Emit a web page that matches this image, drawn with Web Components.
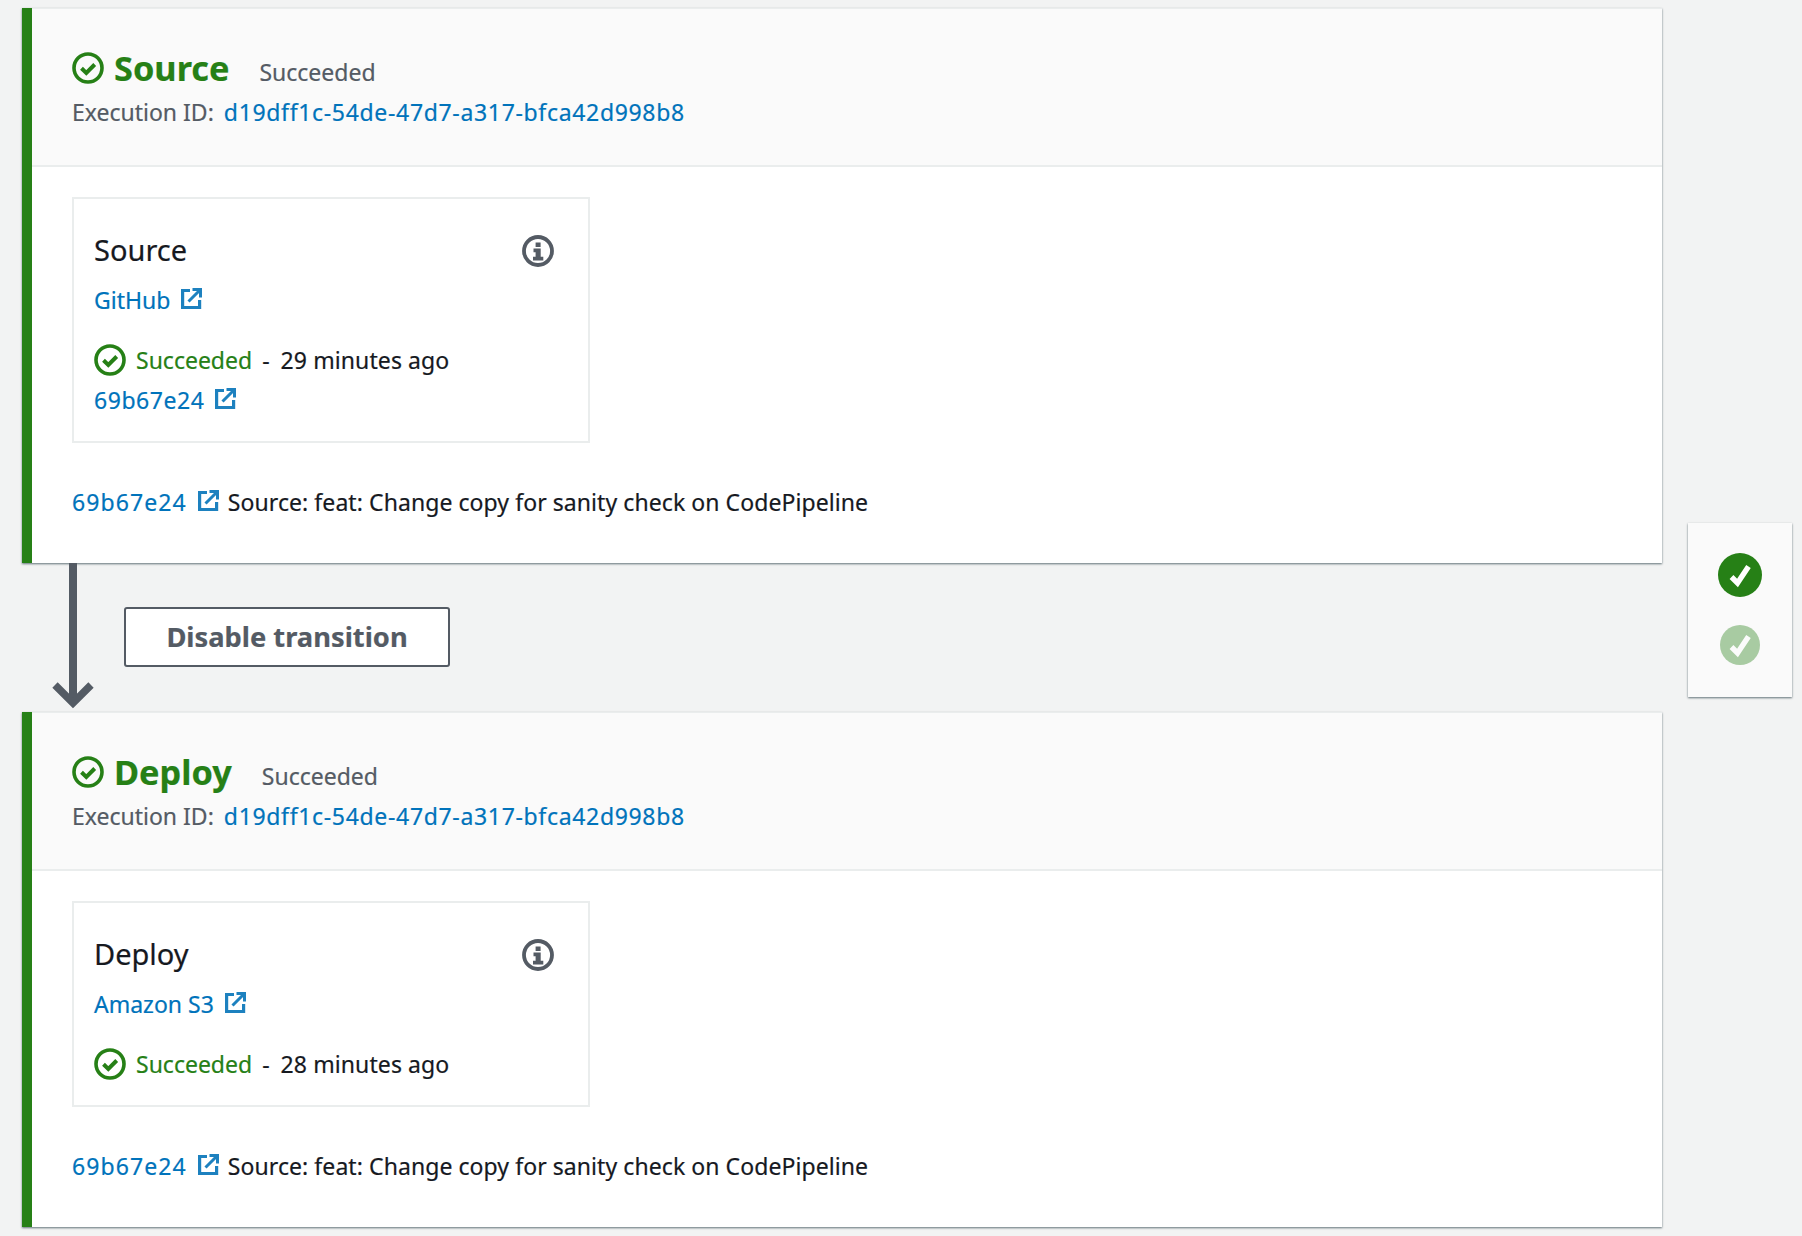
<!DOCTYPE html>
<html>
<head>
<meta charset="utf-8">
<title>Pipeline</title>
<style>
  html, body { margin: 0; padding: 0; background: #f2f3f3; }
  body { font-family: "Noto Sans", "Liberation Sans", sans-serif; color: #16191f; height: 1236px; overflow: hidden; -webkit-text-stroke: .2px; }
</style>
</head>
<body>
<pipeline-view>
  <pipeline-stage name="Source" exec="d19dff1c-54de-47d7-a317-bfca42d998b8">
    <action-card name="Source" provider="GitHub" ago="29 minutes ago" commit="69b67e24"></action-card>
    <commit-line slot="commit" sha="69b67e24" message="Source: feat: Change copy for sanity check on CodePipeline"></commit-line>
  </pipeline-stage>
  <stage-transition label="Disable transition"></stage-transition>
  <pipeline-stage name="Deploy" exec="d19dff1c-54de-47d7-a317-bfca42d998b8">
    <action-card name="Deploy" provider="Amazon S3" ago="28 minutes ago"></action-card>
    <commit-line slot="commit" sha="69b67e24" message="Source: feat: Change copy for sanity check on CodePipeline"></commit-line>
  </pipeline-stage>
  <stage-nav slot="nav"></stage-nav>
</pipeline-view>

<script>
const GREEN = '#268016';

const CHECK_CIRCLE = (size) => `
  <svg width="${size}" height="${size}" viewBox="0 0 32 32" fill="none" stroke="${GREEN}" aria-hidden="true">
    <circle cx="16" cy="16" r="14" stroke-width="3.6"/>
    <path d="M9.5 16.3l4.8 4.6 8.4-8.4" stroke-width="4"/>
  </svg>`;

class PipelineView extends HTMLElement {
  constructor() {
    super();
    this.attachShadow({ mode: 'open' });
    this.shadowRoot.innerHTML = `
      <style>
        :host { display: flex; align-items: flex-start; padding: 8px 0 0 22px; }
        .stages { width: 1640px; flex: none; }
        .side { margin: 515px 0 0 26px; }
      </style>
      <div class="stages"><slot></slot></div>
      <div class="side"><slot name="nav"></slot></div>
    `;
  }
}

class PipelineStage extends HTMLElement {
  constructor() {
    super();
    this.attachShadow({ mode: 'open' });
    const name = this.getAttribute('name');
    const exec = this.getAttribute('exec');
    this.shadowRoot.innerHTML = `
      <style>
        :host { display: block; background: #fff; border-left: 10px solid ${GREEN}; box-shadow: 0 1px 2px 0 rgba(0,28,36,.6); }
        header { background: #fafafa; border-top: 1px solid #eaeded; border-bottom: 2px solid #eaeded; height: 159px; padding-left: 40px; box-sizing: border-box; }
        .title { display: flex; align-items: center; padding-top: 36px; height: 46px; box-sizing: content-box; }
        .title svg { flex: none; }
        h2 { margin: 0 0 0 10px; font-size: 34.3px; line-height: 46px; font-weight: 700; color: ${GREEN}; }
        .state { margin: 8px 0 0 30px; font-size: 23px; line-height: 32px; color: #545b64; }
        .exec { margin-top: 5px; font-size: 23px; line-height: 32px; color: #545b64; }
        .exec a { color: #0073bb; text-decoration: none; margin-left: 4px; letter-spacing: .67px; }
        .body { padding: 30px 40px 0; }
        .commit { padding-top: 43px; height: 120px; box-sizing: border-box; }
      </style>
      <header>
        <div class="title">${CHECK_CIRCLE(32)}<h2>${name}</h2><span class="state">Succeeded</span></div>
        <div class="exec">Execution ID: <a href="#">${exec}</a></div>
      </header>
      <div class="body">
        <slot></slot>
        <div class="commit"><slot name="commit"></slot></div>
      </div>
    `;
  }
}

class ExtLink extends HTMLElement {
  constructor() {
    super();
    this.attachShadow({ mode: 'open' });
    this.shadowRoot.innerHTML = `
      <style>
        :host { display: inline-flex; align-items: center; color: #0073bb; font-size: 23px; line-height: 32px; }
        svg { margin: -4px 0 0 11px; flex: none; }
      </style>
      <slot></slot>
      <svg width="21" height="21" viewBox="0 0 21 21" fill="none" stroke="#1d81bf" stroke-width="3.2">
        <path d="M9 2.5H1.6v17h17V12"/>
        <path d="M7.5 13.5L18 3M11.5 1.6h8v8" stroke-width="3"/>
      </svg>
    `;
  }
}

class ActionCard extends HTMLElement {
  constructor() {
    super();
    this.attachShadow({ mode: 'open' });
    const commit = this.getAttribute('commit');
    this.shadowRoot.innerHTML = `
      <style>
        :host { display: block; width: 518px; box-sizing: border-box; border: 2px solid #eaeded; background: #fff; padding: 32px 20px 25px; }
        .head { display: flex; justify-content: space-between; align-items: center; height: 38px; }
        h3 { margin: 0; font-size: 29px; line-height: 38px; font-weight: 400; }
        .provider { margin-top: 15px; height: 32px; }
        .status { display: flex; align-items: center; margin-top: 28px; height: 32px; font-size: 23px; color: #16191f; }
        .ok { color: ${GREEN}; margin-left: 10px; }
        .dash { margin: 0 11px 0 10px; }
        .ago { letter-spacing: .1px; }
        .sha { margin-top: 8px; height: 32px; }
        .sha ext-link { letter-spacing: .55px; }
        svg { flex: none; }
        .head svg { margin: 2px 14px 0 0; }
      </style>
      <div class="head">
        <h3>${this.getAttribute('name')}</h3>
        <svg width="32" height="32" viewBox="0 0 32 32" fill="none">
          <circle cx="16" cy="16" r="14" stroke="#545b64" stroke-width="3.8"/>
          <rect x="13.6" y="7.5" width="5" height="4.5" fill="#545b64"/>
          <path d="M11.5 13.6h7.2v8.2h2.6v3.6H11v-3.6h2.6v-4.6h-2.1z" fill="#545b64"/>
        </svg>
      </div>
      <div class="provider"><ext-link>${this.getAttribute('provider')}</ext-link></div>
      <div class="status">${CHECK_CIRCLE(32)}<span class="ok">Succeeded</span><span class="dash">-</span><span class="ago">${this.getAttribute('ago')}</span></div>
      ${commit ? `<div class="sha"><ext-link>${commit}</ext-link></div>` : ''}
    `;
  }
}

class CommitLine extends HTMLElement {
  constructor() {
    super();
    this.attachShadow({ mode: 'open' });
    this.shadowRoot.innerHTML = `
      <style>
        :host { display: flex; align-items: center; font-size: 23px; line-height: 32px; color: #16191f; }
        ext-link { letter-spacing: 1.1px; }
        span { margin-left: 9px; letter-spacing: .07px; }
      </style>
      <ext-link>${this.getAttribute('sha')}</ext-link>
      <span>${this.getAttribute('message')}</span>
    `;
  }
}

class StageTransition extends HTMLElement {
  constructor() {
    super();
    this.attachShadow({ mode: 'open' });
    this.shadowRoot.innerHTML = `
      <style>
        :host { display: block; position: relative; height: 149px; padding: 44px 0 0 102px; box-sizing: border-box; }
        svg { position: absolute; left: 30px; top: 0; }
        button { display: block; width: 326px; height: 60px; box-sizing: border-box; background: #fff; border: 2px solid #545b64; border-radius: 3px; padding: 0 0 2px; font: 700 27.3px "Noto Sans", sans-serif; color: #545b64; }
      </style>
      <svg width="44" height="146" viewBox="0 0 44 146" fill="none" stroke="#545b64" stroke-width="8">
        <path d="M21 0V139"/>
        <path d="M3 122l18 18 18-18" stroke-width="7.5"/>
      </svg>
      <button>${this.getAttribute('label')}</button>
    `;
  }
}

class StageNav extends HTMLElement {
  constructor() {
    super();
    this.attachShadow({ mode: 'open' });
    this.shadowRoot.innerHTML = `
      <style>
        :host { display: flex; flex-direction: column; align-items: center; width: 104px; height: 174px; background: #fafafa; box-shadow: 0 1px 2px 0 rgba(0,28,36,.6); padding-top: 30px; box-sizing: border-box; }
        svg { display: block; }
        svg + svg { margin-top: 28px; opacity: .38; }
      </style>
      <svg width="44" height="44" viewBox="0 0 44 44"><circle cx="22" cy="22" r="22" fill="${GREEN}"/><path d="M13.5 24l6 6 11-16.5" fill="none" stroke="#fff" stroke-width="5.4"/></svg>
      <svg width="40" height="40" viewBox="0 0 40 40"><circle cx="20" cy="20" r="20" fill="${GREEN}"/><path d="M11.5 22l6 6 11-16.5" fill="none" stroke="#fff" stroke-width="5.4"/></svg>
    `;
  }
}

customElements.define('pipeline-view', PipelineView);
customElements.define('pipeline-stage', PipelineStage);
customElements.define('ext-link', ExtLink);
customElements.define('action-card', ActionCard);
customElements.define('commit-line', CommitLine);
customElements.define('stage-transition', StageTransition);
customElements.define('stage-nav', StageNav);
</script>
</body>
</html>
